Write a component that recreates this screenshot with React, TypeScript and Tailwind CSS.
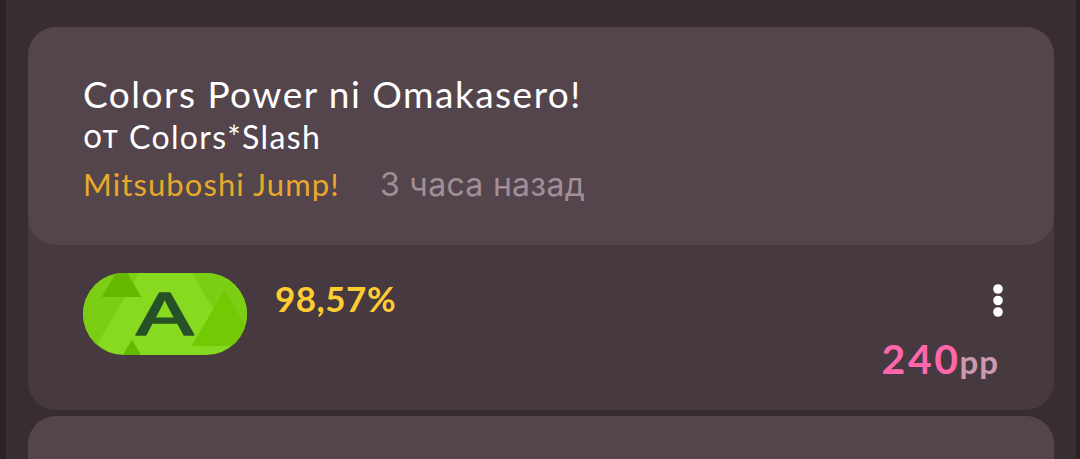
import React from 'react';

interface Score {
  title: string;
  artist: string;
  difficulty: string;
  time: string;
  accuracy: string;
  pp: number;
}

const score: Score = {
  title: 'Colors Power ni Omakasero!',
  artist: 'Colors*Slash',
  difficulty: 'Mitsuboshi Jump!',
  time: '3 часа назад',
  accuracy: '98,57%',
  pp: 240,
};

const RankBadge: React.FC = () => (
  <svg width="164" height="82" viewBox="0 0 164 82" className="shrink-0 rounded-full">
    <rect width="164" height="82" fill="#88da20" />
    <path d="M0 0H56L8 82H0Z" fill="#7bce14" />
    <path d="M109 0H164V82H157Z" fill="#7bce14" />
    <path d="M38.7 -10L58.3 24H19Z" fill="#64b900" />
    <path d="M141.5 17L174 73H108.500Z" fill="#72c904" />
    <path d="M49 66.500L58.500 83H39.500Z" fill="#64b900" />
    <text
      transform="translate(82 61.500) scale(1.56 1)"
      textAnchor="middle"
      fill="#275227"
      stroke="#275227"
      strokeWidth="1.6"
      strokeLinejoin="round"
      className="font-['Inter',sans-serif] text-[57px] font-normal"
    >
      A
    </text>
  </svg>
);

const MenuButton: React.FC = () => (
  <button className="-mr-1" aria-label="menu">
    <svg width="10" height="33" viewBox="0 0 10 33" fill="#fff">
      <circle cx="5" cy="5" r="4.800" />
      <circle cx="5" cy="16.500" r="4.800" />
      <circle cx="5" cy="28" r="4.800" />
    </svg>
  </button>
);

const ScoreCard: React.FC<{ score: Score }> = ({ score }) => (
  <div className="h-[383px] shrink-0 rounded-[28px] bg-[#46393f]">
    <div className="h-[218px] rounded-[28px] bg-[#54454c] px-[55px] pt-[46px] whitespace-nowrap">
      <div className="h-[43px] text-[37px] leading-[41px] tracking-[1.5px] text-white">{score.title}</div>
      <div className="flex h-[43px] text-[32px] leading-[42px] text-white">
        <span className="w-[46px] font-['Inter',sans-serif] tracking-[0.5px]">от</span>
        <span className="tracking-[1.35px]">{score.artist}</span>
      </div>
      <div className="flex h-[50px] text-[31px] leading-[50px]">
        <span className="w-[297px] tracking-[1.1px] text-[#e8a92a]">{score.difficulty}</span>
        <span className="font-['Inter',sans-serif] text-[32px] leading-[52px] tracking-[0.3px] text-[#a18f97]">
          {score.time}
        </span>
      </div>
    </div>
    <div className="flex px-[55px] pt-[28px]">
      <RankBadge />
      <div className="ml-[28px] h-[52px] text-[35px] leading-[50px] font-bold tracking-[0.5px] text-[#ffcc33]">
        {score.accuracy}
      </div>
      <div className="ml-auto flex flex-col items-end pt-[11px]">
        <MenuButton />
        <div className="mt-[12px] flex h-[60px] items-baseline leading-[60px]">
          <span className="w-[78px] text-[41px] font-bold tracking-[2.6px] text-[#ff66ab]">{score.pp}</span>
          <span className="text-[33px] font-bold tracking-[1px] text-[#cc9aae]">pp</span>
        </div>
      </div>
    </div>
  </div>
);

const App: React.FC = () => {
  return (
    <div className="h-[459px] overflow-hidden bg-[#2a2226] pr-[4px] pl-[6px] font-['Lato','Inter',sans-serif]">
      <div className="flex h-full flex-col gap-[6px] bg-[#382e32] pt-[27px] pr-[22px] pl-[22px]">
        <ScoreCard score={score} />
        <div className="h-[218px] shrink-0 rounded-[28px] bg-[#54454c]" />
      </div>
    </div>
  );
};

export default App;
